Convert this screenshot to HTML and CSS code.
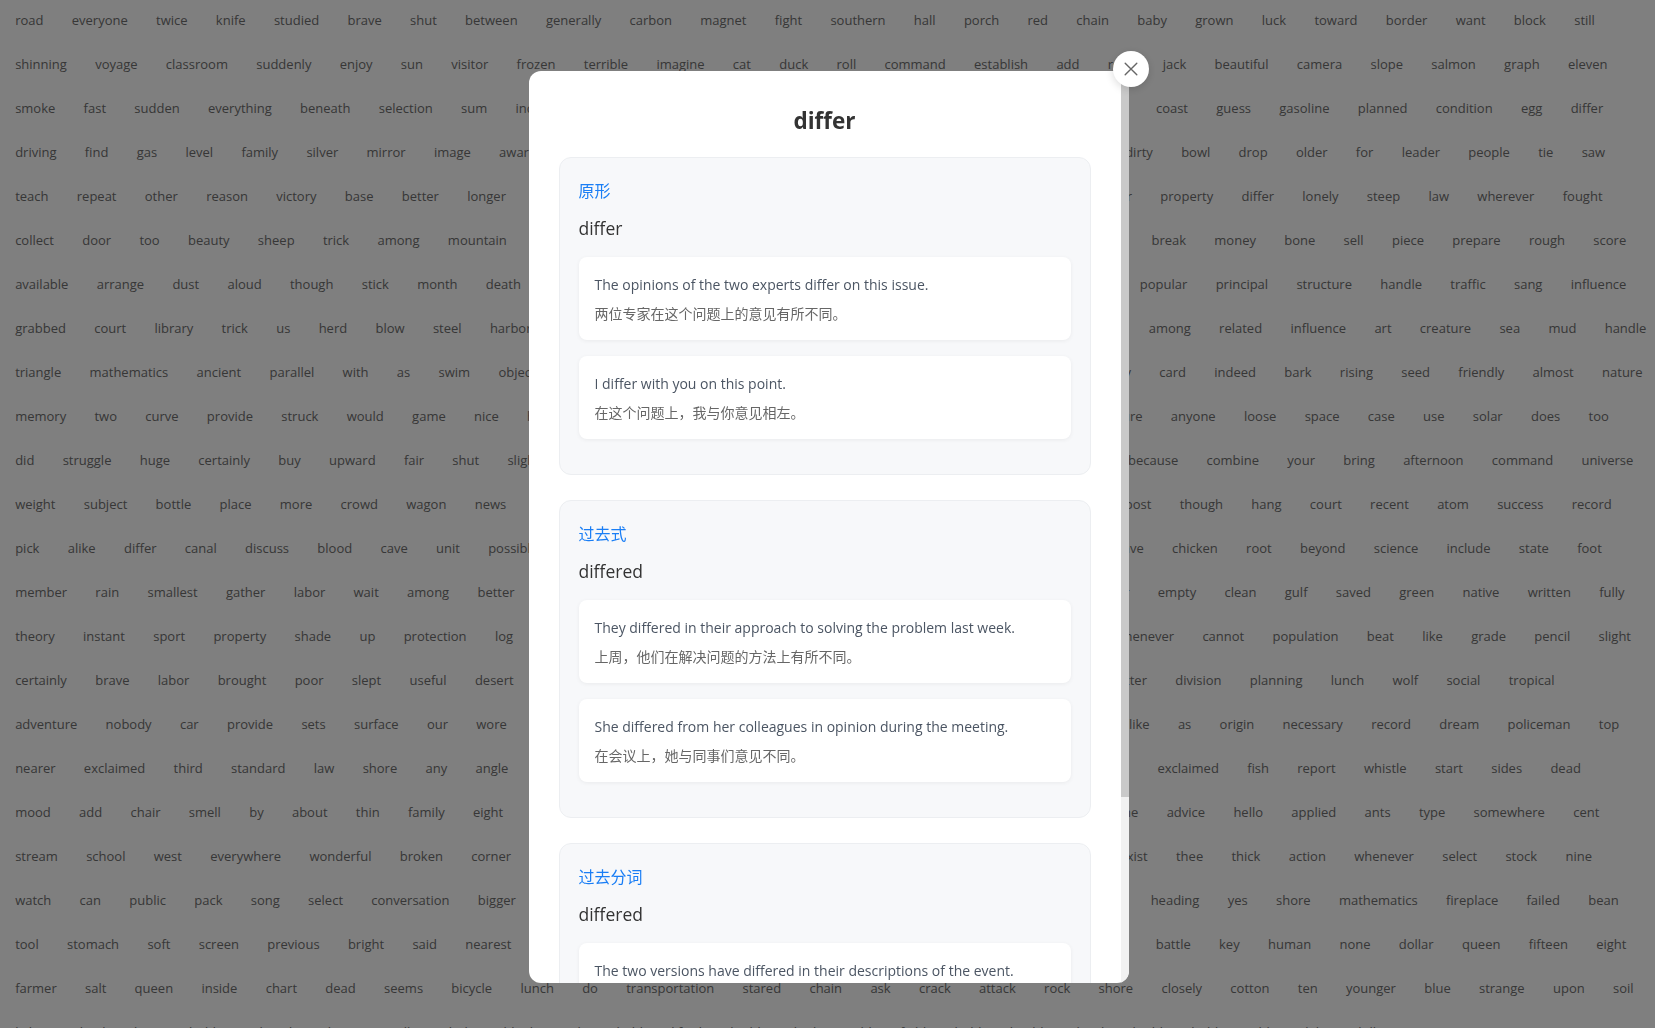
FILE: index.html
```html
<!DOCTYPE html>
<html lang="zh-CN">
<head>
<meta charset="utf-8">
<title>differ</title>
<link rel="stylesheet" href="styles.css">
</head>
<body>
<div class="wall">
  <div class="row"><span>road</span><span>everyone</span><span>twice</span><span>knife</span><span>studied</span><span>brave</span><span>shut</span><span>between</span><span>generally</span><span>carbon</span><span>magnet</span><span>fight</span><span>southern</span><span>hall</span><span>porch</span><span>red</span><span>chain</span><span>baby</span><span>grown</span><span>luck</span><span>toward</span><span>border</span><span>want</span><span>block</span><span>still</span></div>
  <div class="row"><span>shinning</span><span>voyage</span><span>classroom</span><span>suddenly</span><span>enjoy</span><span>sun</span><span>visitor</span><span>frozen</span><span>terrible</span><span>imagine</span><span>cat</span><span>duck</span><span>roll</span><span>command</span><span>establish</span><span>add</span><span>rose</span><span>jack</span><span>beautiful</span><span>camera</span><span>slope</span><span>salmon</span><span>graph</span><span>eleven</span></div>
  <div class="row"><span>smoke</span><span>fast</span><span>sudden</span><span>everything</span><span>beneath</span><span>selection</span><span>sum</span><span>increase</span><span>ocean</span><span>method</span><span>garden</span><span>simple</span><span>window</span><span>pleasant</span><span>bright</span><span>silent</span><span>coast</span><span>guess</span><span>gasoline</span><span>planned</span><span>condition</span><span>egg</span><span>differ</span></div>
  <div class="row"><span>driving</span><span>find</span><span>gas</span><span>level</span><span>family</span><span>silver</span><span>mirror</span><span>image</span><span>award</span><span>history</span><span>teacher</span><span>cloud</span><span>basket</span><span>rapid</span><span>feather</span><span>quiet</span><span>knowledge</span><span>dirty</span><span>bowl</span><span>drop</span><span>older</span><span>for</span><span>leader</span><span>people</span><span>tie</span><span>saw</span></div>
  <div class="row"><span>teach</span><span>repeat</span><span>other</span><span>reason</span><span>victory</span><span>base</span><span>better</span><span>longer</span><span>station</span><span>lucky</span><span>forest</span><span>machine</span><span>stone</span><span>captain</span><span>orange</span><span>pretty</span><span>shoulder</span><span>property</span><span>differ</span><span>lonely</span><span>steep</span><span>law</span><span>wherever</span><span>fought</span></div>
  <div class="row"><span>collect</span><span>door</span><span>too</span><span>beauty</span><span>sheep</span><span>trick</span><span>among</span><span>mountain</span><span>thousand</span><span>rabbit</span><span>deep</span><span>finger</span><span>market</span><span>golden</span><span>spring</span><span>visit</span><span>attention</span><span>break</span><span>money</span><span>bone</span><span>sell</span><span>piece</span><span>prepare</span><span>rough</span><span>score</span></div>
  <div class="row"><span>available</span><span>arrange</span><span>dust</span><span>aloud</span><span>though</span><span>stick</span><span>month</span><span>death</span><span>flower</span><span>mission</span><span>table</span><span>village</span><span>pocket</span><span>simple</span><span>thrown</span><span>kind</span><span>smile</span><span>popular</span><span>principal</span><span>structure</span><span>handle</span><span>traffic</span><span>sang</span><span>influence</span></div>
  <div class="row"><span>grabbed</span><span>court</span><span>library</span><span>trick</span><span>us</span><span>herd</span><span>blow</span><span>steel</span><span>harbor</span><span>evening</span><span>paper</span><span>silent</span><span>bottom</span><span>wheat</span><span>kitchen</span><span>fellow</span><span>sky</span><span>ocean</span><span>among</span><span>related</span><span>influence</span><span>art</span><span>creature</span><span>sea</span><span>mud</span><span>handle</span></div>
  <div class="row"><span>triangle</span><span>mathematics</span><span>ancient</span><span>parallel</span><span>with</span><span>as</span><span>swim</span><span>object</span><span>engine</span><span>war</span><span>planet</span><span>brother</span><span>chosen</span><span>length</span><span>castle</span><span>tree</span><span>ordinary</span><span>card</span><span>indeed</span><span>bark</span><span>rising</span><span>seed</span><span>friendly</span><span>almost</span><span>nature</span></div>
  <div class="row"><span>memory</span><span>two</span><span>curve</span><span>provide</span><span>struck</span><span>would</span><span>game</span><span>nice</span><span>husband</span><span>winter</span><span>station</span><span>medicine</span><span>plains</span><span>journey</span><span>copper</span><span>sister</span><span>picture</span><span>anyone</span><span>loose</span><span>space</span><span>case</span><span>use</span><span>solar</span><span>does</span><span>too</span></div>
  <div class="row"><span>did</span><span>struggle</span><span>huge</span><span>certainly</span><span>buy</span><span>upward</span><span>fair</span><span>shut</span><span>slight</span><span>garden</span><span>perfect</span><span>cloth</span><span>season</span><span>hurry</span><span>exciting</span><span>cattle</span><span>wonderful</span><span>because</span><span>combine</span><span>your</span><span>bring</span><span>afternoon</span><span>command</span><span>universe</span></div>
  <div class="row"><span>weight</span><span>subject</span><span>bottle</span><span>place</span><span>more</span><span>crowd</span><span>wagon</span><span>news</span><span>shadow</span><span>island</span><span>thirty</span><span>careful</span><span>pilot</span><span>answer</span><span>distant</span><span>butter</span><span>river</span><span>post</span><span>though</span><span>hang</span><span>court</span><span>recent</span><span>atom</span><span>success</span><span>record</span></div>
  <div class="row"><span>pick</span><span>alike</span><span>differ</span><span>canal</span><span>discuss</span><span>blood</span><span>cave</span><span>unit</span><span>possible</span><span>cross</span><span>blanket</span><span>fur</span><span>example</span><span>seven</span><span>harder</span><span>mouse</span><span>company</span><span>wave</span><span>chicken</span><span>root</span><span>beyond</span><span>science</span><span>include</span><span>state</span><span>foot</span></div>
  <div class="row"><span>member</span><span>rain</span><span>smallest</span><span>gather</span><span>labor</span><span>wait</span><span>among</span><span>better</span><span>pleasure</span><span>noise</span><span>monkey</span><span>sugar</span><span>nation</span><span>finally</span><span>thumb</span><span>pair</span><span>shoulder</span><span>empty</span><span>clean</span><span>gulf</span><span>saved</span><span>green</span><span>native</span><span>written</span><span>fully</span></div>
  <div class="row"><span>theory</span><span>instant</span><span>sport</span><span>property</span><span>shade</span><span>up</span><span>protection</span><span>log</span><span>rubber</span><span>cottage</span><span>purpose</span><span>forty</span><span>climate</span><span>softly</span><span>vessel</span><span>instrument</span><span>whenever</span><span>cannot</span><span>population</span><span>beat</span><span>like</span><span>grade</span><span>pencil</span><span>slight</span></div>
  <div class="row"><span>certainly</span><span>brave</span><span>labor</span><span>brought</span><span>poor</span><span>slept</span><span>useful</span><span>desert</span><span>cookie</span><span>arrow</span><span>twelve</span><span>glass</span><span>hunter</span><span>ready</span><span>pupil</span><span>basin</span><span>trees</span><span>better</span><span>division</span><span>planning</span><span>lunch</span><span>wolf</span><span>social</span><span>tropical</span></div>
  <div class="row"><span>adventure</span><span>nobody</span><span>car</span><span>provide</span><span>sets</span><span>surface</span><span>our</span><span>wore</span><span>danger</span><span>tiny</span><span>whales</span><span>carry</span><span>bamboo</span><span>lesson</span><span>eastern</span><span>rescue</span><span>fruit</span><span>like</span><span>as</span><span>origin</span><span>necessary</span><span>record</span><span>dream</span><span>policeman</span><span>top</span></div>
  <div class="row"><span>nearer</span><span>exclaimed</span><span>third</span><span>standard</span><span>law</span><span>shore</span><span>any</span><span>angle</span><span>tickets</span><span>swimming</span><span>clay</span><span>author</span><span>needle</span><span>rocket</span><span>perhaps</span><span>doctor</span><span>smile</span><span>exclaimed</span><span>fish</span><span>report</span><span>whistle</span><span>start</span><span>sides</span><span>dead</span></div>
  <div class="row"><span>mood</span><span>add</span><span>chair</span><span>smell</span><span>by</span><span>about</span><span>thin</span><span>family</span><span>eight</span><span>window</span><span>breath</span><span>silence</span><span>hospital</span><span>calm</span><span>nervous</span><span>pattern</span><span>flight</span><span>airplane</span><span>advice</span><span>hello</span><span>applied</span><span>ants</span><span>type</span><span>somewhere</span><span>cent</span></div>
  <div class="row"><span>stream</span><span>school</span><span>west</span><span>everywhere</span><span>wonderful</span><span>broken</span><span>corner</span><span>fences</span><span>quickly</span><span>sailor</span><span>motor</span><span>bridges</span><span>upper</span><span>program</span><span>instrument</span><span>exist</span><span>thee</span><span>thick</span><span>action</span><span>whenever</span><span>select</span><span>stock</span><span>nine</span></div>
  <div class="row"><span>watch</span><span>can</span><span>public</span><span>pack</span><span>song</span><span>select</span><span>conversation</span><span>bigger</span><span>ranch</span><span>hollow</span><span>mental</span><span>bee</span><span>sentence</span><span>shirt</span><span>lovely</span><span>garage</span><span>shoulder</span><span>heading</span><span>yes</span><span>shore</span><span>mathematics</span><span>fireplace</span><span>failed</span><span>bean</span></div>
  <div class="row"><span>tool</span><span>stomach</span><span>soft</span><span>screen</span><span>previous</span><span>bright</span><span>said</span><span>nearest</span><span>typical</span><span>jungle</span><span>metal</span><span>worry</span><span>planet</span><span>central</span><span>feather</span><span>cabin</span><span>mountain</span><span>battle</span><span>key</span><span>human</span><span>none</span><span>dollar</span><span>queen</span><span>fifteen</span><span>eight</span></div>
  <div class="row"><span>farmer</span><span>salt</span><span>queen</span><span>inside</span><span>chart</span><span>dead</span><span>seems</span><span>bicycle</span><span>lunch</span><span>do</span><span>transportation</span><span>stared</span><span>chain</span><span>ask</span><span>crack</span><span>attack</span><span>rock</span><span>shore</span><span>closely</span><span>cotton</span><span>ten</span><span>younger</span><span>blue</span><span>strange</span><span>upon</span><span>soil</span></div>
  <div class="row"><span>light</span><span>wheel</span><span>kept</span><span>hidden</span><span>beside</span><span>layers</span><span>tall</span><span>whole</span><span>blank</span><span>title</span><span>held</span><span>lifted</span><span>build</span><span>think</span><span>told</span><span>field</span><span>bold</span><span>health</span><span>local</span><span>build</span><span>hold</span><span>table</span><span>lake</span><span>hill</span></div>
</div>

<div class="overlay">
  <div class="dialog">
    <button class="close" type="button" aria-label="关闭">
      <svg width="14" height="14" viewBox="0 0 14 14"><path d="M1.2 1.2L12.8 12.8M12.8 1.2L1.2 12.8" stroke="#666" stroke-width="1.4" stroke-linecap="round" fill="none"/></svg>
    </button>
    <div class="frame">
      <div class="modal">
        <h2 class="title">differ</h2>

        <div class="section">
          <div class="label">原形</div>
          <div class="form">differ</div>
          <div class="example">
            <div class="en">The opinions of the two experts differ on this issue.</div>
            <div class="zh">两位专家在这个问题上的意见有所不同。</div>
          </div>
          <div class="example">
            <div class="en">I differ with you on this point.</div>
            <div class="zh">在这个问题上，我与你意见相左。</div>
          </div>
        </div>

        <div class="section">
          <div class="label">过去式</div>
          <div class="form">differed</div>
          <div class="example">
            <div class="en">They differed in their approach to solving the problem last week.</div>
            <div class="zh">上周，他们在解决问题的方法上有所不同。</div>
          </div>
          <div class="example">
            <div class="en">She differed from her colleagues in opinion during the meeting.</div>
            <div class="zh">在会议上，她与同事们意见不同。</div>
          </div>
        </div>

        <div class="section">
          <div class="label">过去分词</div>
          <div class="form">differed</div>
          <div class="example">
            <div class="en">The two versions have differed in their descriptions of the event.</div>
            <div class="zh">这两个版本对该事件的描述有所不同。</div>
          </div>
          <div class="example">
            <div class="en">Their views have differed for many years.</div>
            <div class="zh">多年来，他们的观点一直不同。</div>
          </div>
        </div>
      </div>
      <div class="scrollbar"><div class="thumb"></div></div>
    </div>
  </div>
</div>
</body>
</html>
```

FILE: styles.css
```css
html, body {
  margin: 0;
  padding: 0;
  height: 100%;
  overflow: hidden;
  background: #ffffff;
  font-family: "Open Sans", "Noto Sans CJK SC", sans-serif;
}

/* background word wall */
.wall {
  color: #6e6e6e;
  font-size: 13px;
  padding-left: 1px;
}

.row {
  display: flex;
  height: 40px;
  line-height: 40px;
  margin-bottom: 4px;
  white-space: nowrap;
  overflow: hidden;
}

.row span {
  flex: none;
  padding: 0 14.15px;
}

/* modal */
.overlay {
  position: fixed;
  inset: 0;
  background: rgba(0, 0, 0, 0.5);
  display: flex;
  justify-content: center;
  align-items: flex-start;
  padding-top: 71px;
}

.dialog {
  position: relative;
  width: 600px;
  margin-left: 2px;
}

.close {
  position: absolute;
  top: -20px;
  right: -20px;
  z-index: 2;
  width: 36px;
  height: 36px;
  padding: 0;
  border: none;
  border-radius: 50%;
  background: #ffffff;
  box-shadow: 0 2px 8px rgba(0, 0, 0, 0.15);
  display: flex;
  align-items: center;
  justify-content: center;
  cursor: pointer;
}

.frame {
  position: relative;
  height: 912px;
  overflow: hidden;
  border-radius: 12px;
  background: #ffffff;
}

.modal {
  box-sizing: border-box;
  height: 100%;
  overflow: hidden;
  padding: 30px 38px 30px 30px;
}

.scrollbar {
  position: absolute;
  top: 0;
  right: 0;
  bottom: 0;
  width: 8px;
  background: #f1f1f1;
}

.thumb {
  height: 726px;
  background: #c9c9c9;
}

.title {
  margin: 0 0 17px;
  text-align: center;
  font-size: 22.5px;
  line-height: 39px;
  font-weight: 700;
  color: #333333;
}

.section {
  background: #f7f8fa;
  border: 1px solid #eceef1;
  border-radius: 12px;
  padding: 19px;
  margin-bottom: 25px;
}

.label {
  font-family: "Noto Sans CJK SC", sans-serif;
  font-size: 16px;
  line-height: 26px;
  color: #1a7ef5;
}

.form {
  margin: 11px 0 15px;
  font-size: 17.5px;
  line-height: 28px;
  color: #333333;
}

.example {
  background: #ffffff;
  border-radius: 8px;
  padding: 16px;
  margin-bottom: 16px;
  box-shadow: 0 1px 4px rgba(0, 0, 0, 0.06);
}

.en {
  font-size: 14px;
  line-height: 24px;
  color: #4b5563;
}

.zh {
  margin-top: 6px;
  font-family: "Noto Sans CJK SC", sans-serif;
  font-size: 14px;
  line-height: 21px;
  color: #666666;
}
```
